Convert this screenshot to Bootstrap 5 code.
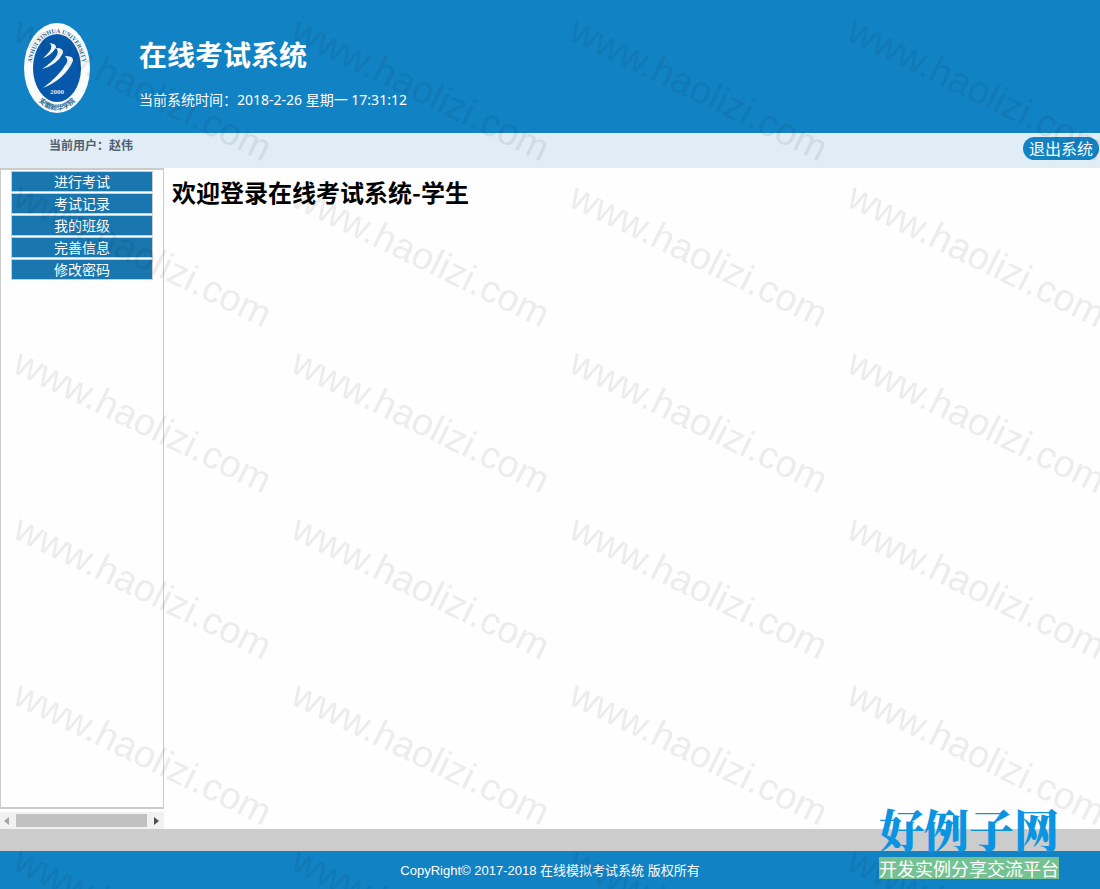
<!DOCTYPE html>
<html lang="zh-CN">
<head>
<meta charset="utf-8">
<meta name="viewport" content="width=device-width, initial-scale=1">
<title>在线考试系统</title>
<link href="https://cdn.jsdelivr.net/npm/bootstrap@5.3.0/dist/css/bootstrap.min.css" rel="stylesheet">
<style>
body { font-family: "Noto Sans", "Noto Sans CJK SC", sans-serif; font-size: 14px; line-height: 20px; background: #fefefe; color: #000; }
.site-head { background: #1182c4; height: 133px; padding-left: 22px; }
.school-logo { width: 70px; height: 92px; margin-top: 2px; }
.head-words { margin-left: 47px; padding-top: 10px; }
.site-title { font: bold 28px/40px "Noto Sans CJK SC", sans-serif; }
.clock { margin-top: 16px; }
.user-bar { background: #e0edf6; height: 35px; padding-left: 49px; padding-right: 1px; }
.user-name { font: bold 12px/24px "Noto Sans CJK SC", sans-serif; color: #4f606e; }
.exit-btn { background: #1182c4; color: #fff; border: 0; border-radius: 12px; font: 16px/23px "Noto Sans CJK SC", sans-serif; padding: 0 6px; margin-top: 4px; }
.side-pane { width: 164px; }
.menu-box { border: 1px solid #ccc; border-width: 2px 1px 2px; padding: 1px 10px; }
.menu-link { border: 1px solid #ccc; background: #1976ae; color: #fff; font: 14px/19px "Noto Sans CJK SC", sans-serif; margin-bottom: 1px; }
.scroll-strip { background: #f1f1f1; height: 17px; margin-top: 3px; padding: 0 5px 0 4px; gap: 7px; }
.scroll-thumb { background: #c1c1c1; height: 13px; }
.welcome { font: bold 24px/36px "Noto Sans CJK SC", sans-serif; padding: 6px 8px; }
.grey-band { background: #ccc; height: 22px; }
.site-foot { background: #1182c4; height: 38px; font: 13px/40px "Liberation Sans", "Noto Sans CJK SC", sans-serif; }
.brand-mark { right: 41px; bottom: 10px; z-index: 3; }
.brand-name { font: 900 45px/45px "Noto Serif CJK SC", "Noto Sans CJK SC", serif; color: #0a94e2; margin-bottom: 6px; }
.brand-line { background: #74c292; color: #fff; font: 18px/22px "Noto Sans CJK SC", sans-serif; }
.site-watermark { z-index: 2; pointer-events: none; }
</style>
<script src="https://cdn.jsdelivr.net/npm/bootstrap@5.3.0/dist/js/bootstrap.bundle.min.js"></script>
</head>
<body class="d-flex flex-column min-vh-100 position-relative overflow-x-hidden">
<header class="site-head d-flex align-items-center text-white">
  <svg class="school-logo" viewBox="0 0 70 92" role="img" aria-label="Anhui Xinhua University">
    <defs>
      <path id="upper-arc" d="M9 48A26 37 0 0 1 61 48"/>
      <path id="lower-arc" d="M10 68A29 41 0 0 0 60 68"/>
    </defs>
    <ellipse cx="35" cy="46" rx="33" ry="45" fill="#f8fcfa"/>
    <ellipse cx="35" cy="46" rx="24" ry="34" fill="#0758aa"/>
    <text font-family="Liberation Serif" font-weight="bold" font-size="6" fill="#23659d"><textPath href="#upper-arc" startOffset="50%" text-anchor="middle">ANHUI XINHUA UNIVERSITY</textPath></text>
    <text font-family="Noto Sans CJK SC" font-weight="bold" font-size="7" fill="#27658f"><textPath href="#lower-arc" startOffset="50%" text-anchor="middle">安徽新华学院</textPath></text>
    <g fill="#f5faf8">
      <path d="M28 21Q35 22 34 26Q28 34 21 36Q27 31 29 27Q30 24 28 21Z"/>
      <path d="M34 26Q42 26 41 31Q35 43 20 47Q31 40 35 33Q37 29 34 26Z"/>
      <path d="M43 34Q52 34 51 39Q43 57 21 66Q37 54 44 42Q47 38 43 34Z"/>
    </g>
    <text x="35" y="72" text-anchor="middle" font-family="Liberation Serif" font-weight="bold" font-size="7" fill="#d9e8f5">2000</text>
  </svg>
  <div class="head-words">
    <h1 class="site-title mb-0">在线考试系统</h1>
    <div class="clock">当前系统时间：2018-2-26 星期一 17:31:12</div>
  </div>
</header>
<div class="user-bar d-flex justify-content-between align-items-start">
  <span class="user-name">当前用户：赵伟</span>
  <button type="button" class="exit-btn">退出系统</button>
</div>
<div class="d-flex flex-grow-1">
  <aside class="side-pane d-flex flex-column flex-shrink-0">
    <nav class="menu-box flex-grow-1 d-flex flex-column">
      <a href="#" class="menu-link text-center text-decoration-none">进行考试</a>
      <a href="#" class="menu-link text-center text-decoration-none">考试记录</a>
      <a href="#" class="menu-link text-center text-decoration-none">我的班级</a>
      <a href="#" class="menu-link text-center text-decoration-none">完善信息</a>
      <a href="#" class="menu-link text-center text-decoration-none">修改密码</a>
    </nav>
    <div class="scroll-strip d-flex align-items-center" aria-hidden="true">
      <svg width="5" height="8"><path d="M5 0V8L0 4Z" fill="#a3a3a3"/></svg>
      <div class="scroll-thumb flex-grow-1"></div>
      <svg width="5" height="8"><path d="M0 0V8L5 4Z" fill="#505050"/></svg>
    </div>
  </aside>
  <main class="flex-grow-1">
    <h2 class="welcome mb-0">欢迎登录在线考试系统-学生</h2>
  </main>
</div>
<div class="grey-band"></div>
<footer class="site-foot text-white text-center">CopyRight© 2017-2018 在线模拟考试系统 版权所有</footer>
<div class="brand-mark position-absolute text-nowrap">
  <div class="brand-name">好例子网</div>
  <div class="brand-line">开发实例分享交流平台</div>
</div>
<svg class="site-watermark position-absolute top-0 start-0 w-100 h-100" aria-hidden="true">
  <defs>
    <pattern id="wm" x="0" y="8" width="278" height="166" patternUnits="userSpaceOnUse">
      <text transform="translate(11 31) rotate(26)" font-family="Liberation Sans" font-size="38" fill="#000" fill-opacity=".07">www.haolizi.com</text>
    </pattern>
  </defs>
  <rect width="100%" height="100%" fill="url(#wm)"/>
</svg>
</body>
</html>
